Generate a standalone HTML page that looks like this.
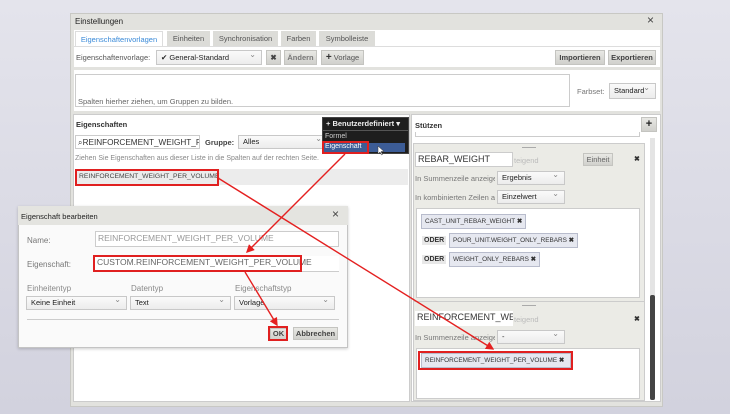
<!DOCTYPE html>
<html><head><meta charset="utf-8"><style>
*{box-sizing:border-box;margin:0;padding:0}
body{width:730px;height:414px;overflow:hidden;background:linear-gradient(#e4e4ec,#d2d2de);font-family:"Liberation Sans",sans-serif;font-size:8px;color:#333;position:relative}
.a{position:absolute}
.btn{position:absolute;background:linear-gradient(#e8e8e4,#d0d0cc);border:1px solid #c4c4c0;font-size:7.5px;font-weight:bold;color:#444;text-align:center;line-height:13px}
.cb{position:absolute;background:linear-gradient(#fafafa,#ececec);border:1px solid #c8c8c8;font-size:7.5px;color:#222;padding-left:4px;line-height:12px}
.cb:after{content:"⌄";position:absolute;right:5px;top:-3px;font-size:8px;color:#888}
.inp{position:absolute;background:#fff;border:1px solid #ccc;font-size:9px;line-height:13px;padding-left:2px;color:#333;white-space:nowrap;overflow:hidden}
.chip{position:absolute;background:#e6e8f0;border:1px solid #b8bccc;font-size:6.4px;line-height:13px;padding:0 3px;color:#333;white-space:nowrap}
.oder{position:absolute;font-size:7px;font-weight:bold;background:#e8e8e8;padding:1px 2px}
.red{position:absolute;border:2px solid #e02020}
.lbl{position:absolute;font-size:7.5px;color:#777}
</style></head><body>
<div class="a" style="left:70px;top:13px;width:593px;height:394px;background:#e2e2de;border:1px solid #c8c8c4"></div>
<div class="a" style="left:75px;top:17px;font-size:8px;color:#222">Einstellungen</div>
<div class="a" style="left:647px;top:13px;font-size:12px;color:#444">×</div>
<div class="a" style="left:74px;top:30px;width:586px;height:37px;background:#fff"></div>
<div class="a" style="left:75px;top:31px;width:88px;height:16px;background:#fff;border:1px solid #ddd;color:#3a8ad8;font-size:7.5px;text-align:center;line-height:15px">Eigenschaftenvorlagen</div>
<div class="a" style="left:167px;top:31px;width:43px;height:15px;background:#dcdcd8;font-size:7.5px;color:#555;text-align:center;line-height:15px">Einheiten</div>
<div class="a" style="left:213px;top:31px;width:65px;height:15px;background:#dcdcd8;font-size:7.5px;color:#555;text-align:center;line-height:15px">Synchronisation</div>
<div class="a" style="left:281px;top:31px;width:35px;height:15px;background:#dcdcd8;font-size:7.5px;color:#555;text-align:center;line-height:15px">Farben</div>
<div class="a" style="left:319px;top:31px;width:56px;height:15px;background:#dcdcd8;font-size:7.5px;color:#555;text-align:center;line-height:15px">Symbolleiste</div>
<div class="a" style="left:74px;top:46px;width:586px;height:1px;background:#ddd"></div>
<div class="a" style="left:76px;top:53px;font-size:7.5px;color:#555">Eigenschaftenvorlage:</div>
<div class="cb" style="left:156px;top:50px;width:106px;height:15px;line-height:13px">✔ General-Standard</div>
<div class="btn" style="left:266px;top:50px;width:15px;height:15px">✖</div>
<div class="btn" style="left:284px;top:50px;width:33px;height:15px;color:#777">Ändern</div>
<div class="btn" style="left:321px;top:50px;width:43px;height:15px;font-weight:normal;color:#555"><b style="font-size:10px;color:#333">+</b> Vorlage</div>
<div class="btn" style="left:555px;top:50px;width:50px;height:15px">Importieren</div>
<div class="btn" style="left:608px;top:50px;width:48px;height:15px">Exportieren</div>
<div class="a" style="left:74px;top:70px;width:586px;height:41px;background:#fff"></div>
<div class="a" style="left:75px;top:74px;width:495px;height:33px;background:#fff;border:1px solid #ccc"></div>
<div class="a" style="left:78px;top:97px;font-size:7.5px;color:#666">Spalten hierher ziehen, um Gruppen zu bilden.</div>
<div class="lbl" style="left:577px;top:87px">Farbset:</div>
<div class="cb" style="left:609px;top:83px;width:47px;height:16px;line-height:14px">Standard</div>
<div class="a" style="left:73px;top:114px;width:337px;height:288px;background:#fff;border:1px solid #ccc"></div>
<div class="a" style="left:76px;top:120px;font-size:7.5px;font-weight:bold;color:#333">Eigenschaften</div>
<div class="inp" style="left:75px;top:135px;width:125px;height:14px;font-size:8.2px">⌕REINFORCEMENT_WEIGHT_P</div>
<div class="a" style="left:205px;top:138px;font-size:7.5px;font-weight:bold;color:#444">Gruppe:</div>
<div class="cb" style="left:238px;top:135px;width:90px;height:14px">Alles</div>
<div class="a" style="left:75px;top:155px;font-size:7px;color:#888">Ziehen Sie Eigenschaften aus dieser Liste in die Spalten auf der rechten Seite.</div>
<div class="a" style="left:75px;top:169px;width:333px;height:16px;background:#ececec"></div>
<div class="a" style="left:79px;top:173px;font-size:6.8px;color:#444">REINFORCEMENT_WEIGHT_PER_VOLUME</div>
<div class="red" style="left:75px;top:169px;width:144px;height:17px"></div>
<div class="a" style="left:322px;top:117px;width:87px;height:37px;background:#1e1e1e;border:1px solid #444"></div>
<div class="a" style="left:326px;top:119px;font-size:7.5px;font-weight:bold;color:#eee">+ Benutzerdefiniert ▾</div>
<div class="a" style="left:323px;top:130px;width:85px;height:1px;background:#555"></div>
<div class="a" style="left:325px;top:133px;font-size:7px;color:#ccc">Formel</div>
<div class="a" style="left:324px;top:143px;width:81px;height:9px;background:#3c5c96"></div>
<div class="a" style="left:325px;top:143px;font-size:7px;color:#fff">Eigenschaft</div>
<div class="red" style="left:322px;top:141px;width:47px;height:13px"></div>
<div class="a" style="left:411px;top:114px;width:250px;height:288px;background:#fff;border:1px solid #ccc"></div>
<div class="a" style="left:415px;top:121px;font-size:7.5px;font-weight:bold;color:#333">Stützen</div>
<div class="btn" style="left:641px;top:117px;width:16px;height:15px;font-size:11px;line-height:12px;color:#222">+</div>
<div class="a" style="left:415px;top:132px;width:225px;height:5px;border:1px solid #ccc;border-top:none"></div>
<div class="a" style="left:413px;top:143px;width:232px;height:258px;background:#ebebe6;border:1px solid #ccc"></div>
<div class="a" style="left:650px;top:138px;width:5px;height:262px;background:#e4e4e4"></div>
<div class="a" style="left:650px;top:295px;width:5px;height:105px;background:#444;border-radius:2px"></div>
<div class="a" style="left:522px;top:147px;width:14px;height:1px;background:#aaa"></div>
<div class="inp" style="left:415px;top:152px;width:98px;height:15px">REBAR_WEIGHT</div>
<div class="lbl" style="left:514px;top:156px;color:#bbb">teigend</div>
<div class="btn" style="left:583px;top:153px;width:30px;height:13px;font-weight:normal;line-height:11px;color:#666">Einheit</div>
<div class="a" style="left:634px;top:155px;font-size:7px;font-weight:bold">✖</div>
<div class="lbl" style="left:415px;top:174px;width:80px;overflow:hidden;white-space:nowrap">In Summenzeile anzeigen</div>
<div class="cb" style="left:497px;top:171px;width:68px;height:14px">Ergebnis</div>
<div class="lbl" style="left:415px;top:193px;width:80px;overflow:hidden;white-space:nowrap">In kombinierten Zeilen anz</div>
<div class="cb" style="left:497px;top:190px;width:68px;height:14px">Einzelwert</div>
<div class="a" style="left:416px;top:208px;width:224px;height:90px;background:#fff;border:1px solid #ccc"></div>
<div class="chip" style="left:421px;top:214px">CAST_UNIT_REBAR_WEIGHT <b>✖</b></div>
<div class="oder" style="left:422px;top:236px">ODER</div>
<div class="chip" style="left:449px;top:233px">POUR_UNIT.WEIGHT_ONLY_REBARS <b>✖</b></div>
<div class="oder" style="left:422px;top:255px">ODER</div>
<div class="chip" style="left:449px;top:252px">WEIGHT_ONLY_REBARS <b>✖</b></div>
<div class="a" style="left:413px;top:301px;width:232px;height:1px;background:#ccc"></div>
<div class="a" style="left:522px;top:305px;width:14px;height:1px;background:#aaa"></div>
<div class="inp" style="left:415px;top:311px;width:98px;height:15px;border:none">REINFORCEMENT_WEIGH</div>
<div class="lbl" style="left:514px;top:315px;color:#bbb">teigend</div>
<div class="a" style="left:634px;top:315px;font-size:7px;font-weight:bold">✖</div>
<div class="lbl" style="left:415px;top:333px;width:80px;overflow:hidden;white-space:nowrap">In Summenzeile anzeigen</div>
<div class="cb" style="left:497px;top:330px;width:68px;height:14px">-</div>
<div class="a" style="left:416px;top:348px;width:224px;height:51px;background:#fff;border:1px solid #ccc"></div>
<div class="chip" style="left:421px;top:353px;width:150px">REINFORCEMENT_WEIGHT_PER_VOLUME <b>✖</b></div>
<div class="red" style="left:418px;top:351px;width:155px;height:19px"></div>
<div class="a" style="left:18px;top:206px;width:330px;height:142px;background:#fafafa;border:1px solid #c4c4c4;box-shadow:0 1px 3px rgba(0,0,0,.2)"></div>
<div class="a" style="left:18px;top:206px;width:330px;height:19px;background:#e4e4e0"></div>
<div class="a" style="left:21px;top:212px;font-size:7.5px;color:#222">Eigenschaft bearbeiten</div>
<div class="a" style="left:332px;top:207px;font-size:12px;color:#444">×</div>
<div class="a" style="left:27px;top:236px;font-size:8px;color:#777">Name:</div>
<div class="inp" style="left:95px;top:231px;width:244px;height:16px;color:#999;font-size:8.5px">REINFORCEMENT_WEIGHT_PER_VOLUME</div>
<div class="a" style="left:27px;top:260px;font-size:8px;color:#777">Eigenschaft:</div>
<div class="inp" style="left:95px;top:256px;width:244px;height:16px;border:none;border-bottom:1px solid #ccc;color:#666;font-size:8.5px">CUSTOM.REINFORCEMENT_WEIGHT_PER_VOLUME</div>
<div class="red" style="left:93px;top:255px;width:209px;height:17px"></div>
<div class="a" style="left:27px;top:284px;font-size:8px;color:#888">Einheitentyp</div>
<div class="a" style="left:131px;top:284px;font-size:8px;color:#888">Datentyp</div>
<div class="a" style="left:235px;top:284px;font-size:8px;color:#888">Eigenschaftstyp</div>
<div class="cb" style="left:26px;top:296px;width:101px;height:14px">Keine Einheit</div>
<div class="cb" style="left:130px;top:296px;width:101px;height:14px">Text</div>
<div class="cb" style="left:234px;top:296px;width:101px;height:14px">Vorlage</div>
<div class="a" style="left:27px;top:319px;width:312px;height:1px;background:#ccc"></div>
<div class="btn" style="left:270px;top:328px;width:17px;height:12px;line-height:10px">OK</div>
<div class="red" style="left:268px;top:326px;width:20px;height:15px"></div>
<div class="btn" style="left:293px;top:327px;width:45px;height:13px;line-height:11px">Abbrechen</div>
<svg class="a" style="left:0;top:0" width="730" height="414">
<defs><marker id="m" markerWidth="6" markerHeight="6" refX="5" refY="3" orient="auto"><path d="M0,0 L6,3 L0,6z" fill="#e42020"/></marker></defs>
<path d="M378,146 l0,8 l2,-2 l1.5,3 l1,-0.5 l-1.5,-3 l3,0z" fill="#fff" stroke="#333" stroke-width="0.5"/>
<g stroke="#e42020" stroke-width="1.4" fill="none">
<line x1="345" y1="154" x2="247" y2="252" marker-end="url(#m)"/>
<line x1="218" y1="178" x2="493" y2="349" marker-end="url(#m)"/>
<line x1="245" y1="272" x2="277" y2="325" marker-end="url(#m)"/>
</g></svg>
</body></html>
